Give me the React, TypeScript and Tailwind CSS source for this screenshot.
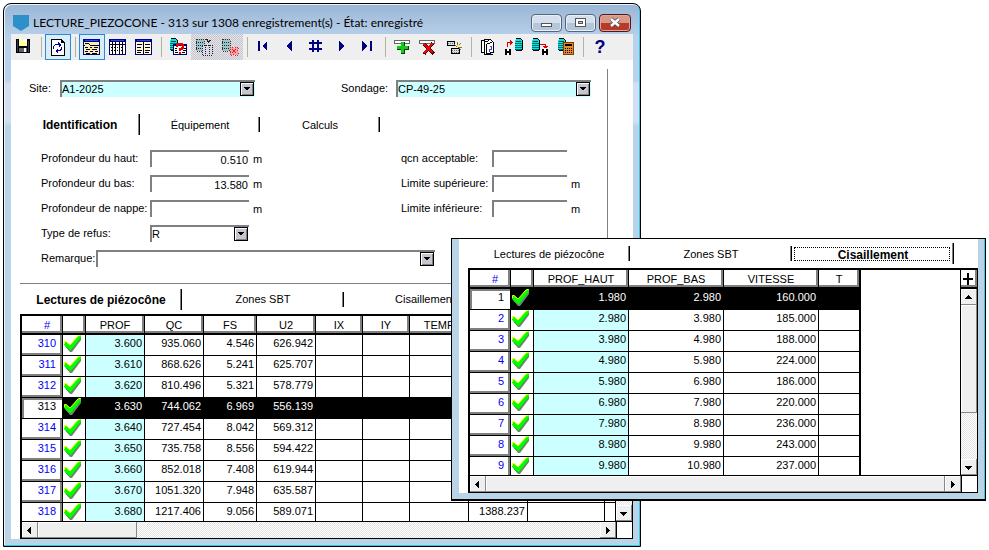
import { useState, type ReactNode } from "react";

type Column = { label: string; width: string; tint?: boolean };

const mainColumns: Column[] = [
  { label: "PROF", width: "w-[59px]", tint: true },
  { label: "QC", width: "w-[59px]" },
  { label: "FS", width: "w-[53px]" },
  { label: "U2", width: "w-[59px]" },
  { label: "IX", width: "w-[47px]" },
  { label: "IY", width: "w-[47px]" },
  { label: "TEMP", width: "w-[59px]" },
  { label: "", width: "w-[59px]" },
  { label: "", width: "w-[77px]" },
  { label: "", width: "w-[11px]" },
];

const mainRows = [
  ["310", "3.600", "935.060", "4.546", "626.942", "", "", "", "", "", ""],
  ["311", "3.610", "868.626", "5.241", "625.707", "", "", "", "", "", ""],
  ["312", "3.620", "810.496", "5.321", "578.779", "", "", "", "", "", ""],
  ["313", "3.630", "744.062", "6.969", "556.139", "", "", "", "", "", ""],
  ["314", "3.640", "727.454", "8.042", "569.312", "", "", "", "", "", ""],
  ["315", "3.650", "735.758", "8.556", "594.422", "", "", "", "", "", ""],
  ["316", "3.660", "852.018", "7.408", "619.944", "", "", "", "", "", ""],
  ["317", "3.670", "1051.320", "7.948", "635.587", "", "", "", "", "", ""],
  ["318", "3.680", "1217.406", "9.056", "589.071", "", "", "", "1388.237", "", ""],
];

const shearColumns: Column[] = [
  { label: "PROF_HAUT", width: "w-[95px]", tint: true },
  { label: "PROF_BAS", width: "w-[95px]" },
  { label: "VITESSE", width: "w-[95px]" },
  { label: "T", width: "w-[42px]" },
];

const shearRows = [
  ["1", "1.980", "2.980", "160.000", ""],
  ["2", "2.980", "3.980", "185.000", ""],
  ["3", "3.980", "4.980", "188.000", ""],
  ["4", "4.980", "5.980", "224.000", ""],
  ["5", "5.980", "6.980", "186.000", ""],
  ["6", "6.980", "7.980", "220.000", ""],
  ["7", "7.980", "8.980", "236.000", ""],
  ["8", "8.980", "9.980", "243.000", ""],
  ["9", "9.980", "10.980", "237.000", ""],
];

function Check() {
  return (
    <svg width="20" height="19" viewBox="0 0 20 19" className="block" role="img" aria-label="valide">
      <path d="M3 8 L8 12 L18 1 L18 5 L9 17 L7 17 L2 11 Z" fill="#808080" />
      <path d="M1 7 L3 6 L7 10 L15 1 L18 0 L18 3 L8 15 L7 15 L1 10 Z" fill="#00ff00" />
      <path d="M1.500 9 V6.500 H3 L7 10 L15 1 L18 0" fill="none" stroke="#ffff00" strokeWidth="1" />
      <path d="M3 12 L7 15.500 L8 15.500 L18 3" fill="none" stroke="#38a838" strokeWidth="1" />
    </svg>
  );
}

function Icon({ children }: { children: ReactNode }) {
  return (
    <svg width="18" height="18" viewBox="0 0 18 18" shapeRendering="crispEdges" aria-hidden="true">
      {children}
    </svg>
  );
}

function Database({ x, y, h = 13 }: { x: number; y: number; h?: number }) {
  const bands = [];
  for (let i = 4; i < h - 1; i += 2) bands.push(i);
  return (
    <g transform={`translate(${x} ${y})`}>
      <path d={`M2 0h5v1h1v1h1v${h - 3}h-1v1h-6v-1h-1v-${h - 3}h1z`} fill="#000" />
      <path d={`M2 1h5v1h1v${h - 4}h-1v1h-5v-1h-1v-${h - 4}h1z`} fill="#00e6e6" />
      {bands.map((b) => (
        <rect key={b} x="1" y={b + 1} width="7" height="1" fill="#004848" opacity="0.75" />
      ))}
      <rect x="2" y="3" width="5" height="1" fill="#004848" />
    </g>
  );
}

function GridFrame({ children }: { children?: ReactNode }) {
  return (
    <>
      <rect x="0" y="1" width="17" height="16" fill="#000080" />
      <rect x="1" y="4" width="15" height="12" fill="#fff" />
      <rect x="2" y="2" width="13" height="1" fill="#2a49d8" />
      {children}
    </>
  );
}

const icons = {
  save: (
    <Icon>
      <g transform="translate(-1 -1)">
        <rect x="2" y="2" width="14" height="14" fill="#000" />
        <rect x="5" y="2" width="8" height="7" fill="#ffff9c" />
        <rect x="9" y="2" width="4" height="3" fill="#fff" />
        <rect x="3" y="3" width="1" height="12" fill="#34345c" />
        <rect x="14" y="4" width="1" height="11" fill="#34345c" />
        <rect x="5" y="11" width="8" height="4" fill="#666" />
        <rect x="10" y="11" width="2" height="4" fill="#fff" />
      </g>
    </Icon>
  ),
  refresh: (
    <Icon>
      <path d="M2 1h10l4 4v13H2z" fill="#000" />
      <path d="M3 2h9v3h3v12H3z" fill="#fff" />
      <path d="M12.500 2v2.500H15" fill="none" stroke="#000" />
      <path d="M5 11V8h1V7h4v2h1V8h1V6h-1V5h-1V4H9v2H6v1H5v1H4v3z" fill="#0000a0" />
      <path d="M13 9v3h-1v1H9v2H8v-1H7v-2h1v-1h1v1h2v-1h1V9z" fill="#0000a0" />
    </Icon>
  ),
  form: (
    <Icon>
      <GridFrame>
        <rect x="1" y="4" width="15" height="12" fill="#f8ecb8" />
        <path
          d="M2 5h4M1 7h1M6 6h1M7 7h9M2 9h3M7 9h2M11 9h4M3 11h4M9 11h5M2 13h3M7 13h3M12 13h3M3 15h4M9 15h5"
          stroke="#000"
          transform="translate(0 .5)"
        />
      </GridFrame>
    </Icon>
  ),
  table: (
    <Icon>
      <GridFrame>
        <path d="M3.500 4v12M6.500 4v12M10.500 4v12M13.500 4v12" stroke="#000" />
        <path d="M1 6.500h15" stroke="#000" />
        <path d="M1.500 9.500h1M4.500 9.500h1M8 9.500h1M12 9.500h1M1.500 12.500h1M4.500 12.500h1M8 12.500h1M12 12.500h1" stroke="#000" />
      </GridFrame>
    </Icon>
  ),
  split: (
    <Icon>
      <GridFrame>
        <rect x="1" y="4" width="15" height="12" fill="#fff8dc" />
        <path
          d="M8.500 4v12M2 6.500h5M10 6.500h5M2 9.500h4M10 9.500h5M2 12.500h5M10 12.500h5M2 14.500h4M10 14.500h4"
          stroke="#000"
        />
      </GridFrame>
    </Icon>
  ),
  query: (
    <Icon>
      <Database x={0} y={0} />
      <rect x="4" y="6" width="14" height="11" fill="#000080" />
      <rect x="5" y="8" width="12" height="8" fill="#fff" />
      <path d="M6 10.500h2M14 10.500h3M6 12.500h2M14 12.500h3M6 14.500h3M13 14.500h3" stroke="#000" />
      <path d="M8 9V7h1V6h4v1h1v3h-1v1h-2v2M10 15h2" fill="none" stroke="#f00000" strokeWidth="2" />
    </Icon>
  ),
  tableOff: (
    <Icon>
      <path d="M2 1h6l1 1v10l-1 1H2l-1-1V2z" fill="#9cc4c8" stroke="#333" strokeDasharray="1 1" />
      <path d="M1 4.500h8M1 7.500h8M1 10.500h8" stroke="#222" strokeDasharray="1 1" />
      <path d="M7 7h10v10H7zM10 7v10M14 7v10" fill="#d8d8e8" stroke="#222" strokeDasharray="1 1" />
      <path d="M10 1h2v2h2v-1h2M13 3v2" fill="none" stroke="#222" />
    </Icon>
  ),
  deleteOff: (
    <Icon>
      <path d="M2 1h6l1 1v10l-1 1H2l-1-1V2z" fill="#9cc4c8" stroke="#333" strokeDasharray="1 1" />
      <path d="M1 4.500h8M1 7.500h8M1 10.500h8" stroke="#222" strokeDasharray="1 1" />
      <path
        d="M9 9h3l1 1 1-1h3v3l-1 1 1 1v3h-3l-1-1-1 1H9v-3l1-1-1-1z"
        fill="#f4a0a4"
        stroke="#e02030"
        strokeDasharray="1 1"
      />
      <path d="M11 11l4 4M15 11l-4 4" stroke="#e02030" />
    </Icon>
  ),
  first: (
    <Icon>
      <path d="M3 3h2v10H3zM12 3v10l-5-5z" fill="#000080" />
    </Icon>
  ),
  previous: (
    <Icon>
      <path d="M11 3v10L5 8z" fill="#000080" />
    </Icon>
  ),
  goto: (
    <Icon>
      <path d="M6 2v12M11 2v12M2 5h13M2 11h13" stroke="#000080" strokeWidth="2" />
    </Icon>
  ),
  next: (
    <Icon>
      <path d="M6 3v10l6-5z" fill="#000080" />
    </Icon>
  ),
  last: (
    <Icon>
      <path d="M3 3v10l6-5zM11 3h2v10h-2z" fill="#000080" />
    </Icon>
  ),
  add: (
    <Icon>
      <path d="M1.500 2.500h15v3h-15z" fill="#fff" stroke="#666" />
      <path d="M8 4h4v4h4v4h-4v4H8v-4H4V8h4z" fill="#004000" />
      <path d="M8 4h3v4h4v3h-4v4H8v-4H4V8h4z" fill="#10c818" />
    </Icon>
  ),
  remove: (
    <Icon>
      <path d="M.5 2.500h15v3H.5z" fill="#fff" stroke="#666" />
      <path d="M5 6l10 10M14 5L5 16" stroke="#500000" strokeWidth="3" />
      <path d="M5 6l9 9M14 5L5 15" stroke="#e00808" strokeWidth="2" />
    </Icon>
  ),
  duplicate: (
    <Icon>
      <path d="M2.500 3.500h7v4h-7zM6.500 10.500h8v5h-8z" fill="#ddd" stroke="#000" />
      <path d="M3 5.500h6M7 12.500h7M7 14.500h7" stroke="#777" strokeDasharray="1 1" />
      <path d="M12 4v3M16 5l-3 3M9 6l3 3M13 9h4M14 10l2 2" stroke="#8a7430" />
      <rect x="12" y="7" width="2" height="2" fill="#ffe860" />
    </Icon>
  ),
  documents: (
    <Icon>
      <path d="M2.500 2.500h3v-1h6l3 3v10h-3v1h-4v1h-2v-2h-3z" fill="#fff" stroke="#000" />
      <path d="M5.500 2v12M7.500 5.500v11h6M7.500 5.500h3l3-2M5.500 3.500h3l2-2" fill="none" stroke="#000" />
      <path d="M12 8v3h-2v2M11 8h2M10 11v3" stroke="#3048d8" fill="none" />
    </Icon>
  ),
  upload: (
    <Icon>
      <Database x={9} y={0} />
      <path d="M2.500 9V4.500H8M5.500 2v5M6.500 3v3" fill="none" stroke="#e00000" />
      <rect x="0" y="11" width="6" height="6" fill="#000" />
      <rect x="2" y="11" width="2" height="2" fill="#fff" />
      <rect x="2" y="15" width="2" height="2" fill="#fff" />
    </Icon>
  ),
  download: (
    <Icon>
      <Database x={0} y={0} />
      <path d="M9 6.500h5.500V10M12 8.500h5M13 9.500h3" fill="none" stroke="#e00000" />
      <rect x="11" y="11" width="6" height="6" fill="#000" />
      <rect x="13" y="11" width="2" height="2" fill="#fff" />
      <rect x="13" y="15" width="2" height="2" fill="#fff" />
    </Icon>
  ),
  calculator: (
    <Icon>
      <Database x={0} y={0} />
      <rect x="6" y="4" width="11" height="13" fill="#7a3c00" />
      <rect x="7" y="5" width="9" height="11" fill="#e88830" />
      <rect x="8" y="6" width="7" height="2" fill="#000" />
      <path d="M8 10h7M8 12h7M8 14h7" stroke="#000" strokeDasharray="1 1" transform="translate(0 .5)" />
    </Icon>
  ),
  help: <span className="text-lg leading-5 font-bold text-[#000080]">?</span>,
};

type ToolName = keyof typeof icons;
const toolGroups: { name: ToolName; label: string; state?: "on" | "off" }[][] = [
  [{ name: "save", label: "Enregistrer" }],
  [{ name: "refresh", label: "Actualiser", state: "on" }],
  [
    { name: "form", label: "Vue formulaire", state: "on" },
    { name: "table", label: "Vue table" },
    { name: "split", label: "Vue mixte" },
  ],
  [
    { name: "query", label: "Requête" },
    { name: "tableOff", label: "Filtrer", state: "off" },
    { name: "deleteOff", label: "Annuler la requête", state: "off" },
  ],
  [
    { name: "first", label: "Premier" },
    { name: "previous", label: "Précédent" },
    { name: "goto", label: "Aller à" },
    { name: "next", label: "Suivant" },
    { name: "last", label: "Dernier" },
  ],
  [
    { name: "add", label: "Ajouter" },
    { name: "remove", label: "Supprimer" },
    { name: "duplicate", label: "Dupliquer" },
  ],
  [
    { name: "documents", label: "Documents" },
    { name: "upload", label: "Importer" },
    { name: "download", label: "Exporter" },
    { name: "calculator", label: "Calculer" },
  ],
  [{ name: "help", label: "Aide" }],
];

function Toolbar() {
  return (
    <div role="toolbar" className="flex h-[26px] overflow-hidden bg-[#efefef]">
      {toolGroups.map((group, i) => (
        <div key={group[0].name} className="flex">
          {i > 0 && (
            <div className="flex w-2 justify-center py-[3px]">
              <div className="w-px bg-[#b4b49c]" />
            </div>
          )}
          {group.map((tool) => (
            <button
              key={tool.name}
              type="button"
              aria-label={tool.label}
              disabled={tool.state === "off"}
              className={
                "flex size-[26px] items-center justify-center " +
                (tool.state === "on"
                  ? "border border-[#2a8ad4] bg-[#d8effb]"
                  : tool.state === "off"
                    ? "bg-[repeating-conic-gradient(#c4c4cc_0_25%,#e6e6ea_0_50%)] bg-[length:2px_2px]"
                    : "")
              }
            >
              {icons[tool.name]}
            </button>
          ))}
        </div>
      ))}
    </div>
  );
}

function Tabs({
  names,
  active,
  onSelect,
  tabWidth,
  height,
  focused,
}: {
  names: string[];
  active: string;
  onSelect: (name: string) => void;
  tabWidth: string;
  height: string;
  focused?: boolean;
}) {
  return (
    <div role="tablist" className={"flex items-center " + height}>
      {names.map((name) => {
        const on = name === active;
        return (
          <div key={name} className={"flex shrink-0 items-center " + tabWidth}>
            <button
              type="button"
              role="tab"
              aria-selected={on}
              onClick={() => onSelect(name)}
              className={
                "h-[14px] flex-1 pt-px pl-[2px] whitespace-nowrap " +
                (on ? "text-xs leading-3 font-bold " : "leading-[13px] ") +
                (on && focused ? "mx-[2px] border border-dotted border-black" : "")
              }
            >
              {name}
            </button>
            <div className={"w-[2px] border-l border-[#808080] bg-black " + (on ? "h-[21px]" : "h-[15px]")} />
          </div>
        );
      })}
    </div>
  );
}

const arrows = {
  up: "M4 9h7L7.500 5z",
  down: "M4 6h7L7.500 10z",
  left: "M9 4v7L5 7.500z",
  right: "M6 4v7l4-3.500z",
};

function ScrollButton({ dir, label }: { dir: keyof typeof arrows; label: string }) {
  return (
    <button
      type="button"
      aria-label={label}
      className="size-4 shrink-0 bg-[#efefef] shadow-[inset_-1px_-1px_0_#888,inset_1px_1px_0_#fff]"
    >
      <svg width="15" height="15" viewBox="0 0 15 15" className="block" shapeRendering="crispEdges">
        <path d={arrows[dir]} fill="#000" />
      </svg>
    </button>
  );
}

const thumbStyle = "bg-[#efefef] shadow-[inset_-1px_-1px_0_#888,inset_1px_1px_0_#fff]";

function DataGrid({
  caption,
  columns,
  rows,
  selected,
  closed,
  vThumb,
  hThumb,
}: {
  caption: string;
  columns: Column[];
  rows: string[][];
  selected: string;
  closed?: boolean;
  vThumb: string;
  hThumb: string;
}) {
  const edge = (last: boolean) => (last ? (closed ? "border-r-2 " : "") : "border-r ");
  const lastIndex = columns.length - 1;
  return (
    <div className="border-t-2 border-r border-b border-l-2 border-black">
      <div className="flex h-[206px] border-b border-black">
        <div className="min-w-0 flex-1 overflow-hidden">
          <table className="w-0 table-fixed border-separate border-spacing-0" aria-label={caption}>
            <thead>
              <tr>
                <th className="h-[19px] w-[41px] border-r border-b-2 border-black p-0 pr-3 text-right leading-4 font-normal text-[#0000ff] shadow-[inset_-2px_-2px_0_#808080]">
                  #
                </th>
                <th className="h-[19px] w-[23px] border-r border-b-2 border-black p-0 shadow-[inset_-2px_-2px_0_#808080]" />
                {columns.map((c, i) => (
                  <th
                    key={i}
                    className={
                      "h-[19px] border-b-2 border-black p-0 text-center leading-4 font-normal shadow-[inset_-2px_-2px_0_#808080] " +
                      edge(i === lastIndex) +
                      c.width
                    }
                  >
                    {c.label}
                  </th>
                ))}
              </tr>
            </thead>
            <tbody>
              {rows.map((row) => {
                const on = row[0] === selected;
                return (
                  <tr key={row[0]} className={on ? "bg-black text-white" : ""}>
                    <th
                      scope="row"
                      className={
                        "h-[21px] border-r border-b border-black bg-white p-0 pr-[6px] text-right align-top leading-4 font-normal " +
                        (on
                          ? "text-black shadow-[inset_2px_2px_0_#808080]"
                          : "text-[#0000ff] shadow-[inset_-2px_-2px_0_#808080]")
                      }
                    >
                      {row[0]}
                    </th>
                    <td className="h-[21px] border-r border-b border-black p-0 align-top">
                      <Check />
                    </td>
                    {columns.map((c, i) => (
                      <td
                        key={i}
                        className={
                          "h-[21px] border-b border-black p-0 pr-[2px] text-right align-top leading-4 " +
                          edge(i === lastIndex) +
                          (c.tint && !on ? "bg-[#ccffff]" : "")
                        }
                      >
                        {row[i + 1]}
                      </td>
                    ))}
                  </tr>
                );
              })}
            </tbody>
          </table>
        </div>
        <div className="flex w-[17px] flex-col border-l border-black bg-[repeating-conic-gradient(#e4e4e4_0_25%,#fff_0_50%)] bg-[length:2px_2px]">
          <button
            type="button"
            aria-label="Ajouter une colonne"
            className="h-[19px] shrink-0 border-b-2 border-black bg-white shadow-[inset_-2px_-2px_0_#808080]"
          >
            <svg width="15" height="16" viewBox="0 0 15 16" className="block" shapeRendering="crispEdges">
              <path d="M6 2h2v5h4v2H8v5H6V9H2V7h4z" fill="#000" />
            </svg>
          </button>
          <ScrollButton dir="up" label="Défiler vers le haut" />
          <div className="flex-1">
            <div className={thumbStyle + " " + vThumb} />
          </div>
          <ScrollButton dir="down" label="Défiler vers le bas" />
        </div>
      </div>
      <div className="flex h-4 bg-[repeating-conic-gradient(#e4e4e4_0_25%,#fff_0_50%)] bg-[length:2px_2px]">
        <ScrollButton dir="left" label="Défiler à gauche" />
        <div className="flex-1">
          <div className={"h-4 " + thumbStyle + " " + hThumb} />
        </div>
        <ScrollButton dir="right" label="Défiler à droite" />
        <div className="w-4 border-l border-black bg-white" />
      </div>
    </div>
  );
}

function Combo({ id, options, width, tint }: { id: string; options: string[]; width: string; tint?: boolean }) {
  return (
    <div
      className={
        "relative h-[17px] border-t-2 border-l-2 border-[#808080] " + width + (tint ? " bg-[#ccffff]" : "")
      }
    >
      <select id={id} className="block h-[15px] w-full appearance-none leading-[15px] outline-none">
        {options.map((o) => (
          <option key={o}>{o}</option>
        ))}
      </select>
      <span className="pointer-events-none absolute top-0 right-px flex h-[14px] w-[14px] items-center justify-center border border-black bg-[#c6c6ce] shadow-[inset_1px_1px_0_#fff,inset_-1px_-1px_0_#808080]">
        <svg width="6" height="4" viewBox="0 0 6 4" shapeRendering="crispEdges">
          <path d="M0 0h6v1H5v1H4v1H2V2H1V1H0z" fill="#000" />
        </svg>
      </span>
    </div>
  );
}

function NumberField({
  id,
  label,
  value = "",
  unit,
  labelWidth,
  width,
}: {
  id: string;
  label: string;
  value?: string;
  unit?: string;
  labelWidth: string;
  width: string;
}) {
  return (
    <div className="flex h-[17px] items-center">
      <label htmlFor={id} className={"shrink-0 whitespace-nowrap " + labelWidth}>
        {label}
      </label>
      <input
        id={id}
        defaultValue={value}
        className={"h-[17px] border-t-2 border-l-2 border-[#808080] bg-white pr-px text-right outline-none " + width}
      />
      {unit && <span className="pt-[2px] pl-1">{unit}</span>}
    </div>
  );
}

function MainWindow() {
  const [section, setSection] = useState("Identification");
  const [sheet, setSheet] = useState("Lectures de piézocône");
  return (
    <section className="m-[3px] w-full max-w-[638px] rounded-t-lg border border-black bg-[linear-gradient(#9ab6d6,#b9d1ea_34px,#b9d1ea_76px,#d3def2_80px,#d3def2_118px,#b9d4e6_122px)] px-[7px] pb-[7px] shadow-[inset_-1px_-1px_0_#35c8e8,inset_1px_1px_0_#e8f4fc]">
      <header className="flex h-[30px] items-center">
        <svg width="16" height="16" viewBox="0 0 16 16" className="mt-2 ml-[2px]" aria-hidden="true">
          <path d="M0 0h16v11l-8 5-8-5z" fill="#2e90c8" />
        </svg>
        <h1 className="mt-2 ml-1 flex-1 font-['Lato','Open_Sans',sans-serif] text-xs leading-5 whitespace-nowrap">
          LECTURE_PIEZOCONE - 313 sur 1308 enregistrement(s) - État: enregistré
        </h1>
        <div className="mt-[7px] mr-[2px] flex gap-[3px]">
          <button
            type="button"
            aria-label="Réduire"
            className="h-[18px] w-[31px] rounded-sm border border-[#56657c] bg-linear-to-b from-[#d4e0ee] from-50% to-[#b4c6dc] to-50% shadow-[inset_0_0_0_1px_#e8f0f8]"
          >
            <svg width="29" height="16" viewBox="0 0 29 16" className="block" shapeRendering="crispEdges">
              <path d="M9.500 8.500h10v3h-10z" fill="#fff" stroke="#555" />
            </svg>
          </button>
          <button
            type="button"
            aria-label="Agrandir"
            className="h-[18px] w-[31px] rounded-sm border border-[#56657c] bg-linear-to-b from-[#d4e0ee] from-50% to-[#b4c6dc] to-50% shadow-[inset_0_0_0_1px_#e8f0f8]"
          >
            <svg width="29" height="16" viewBox="0 0 29 16" className="block" shapeRendering="crispEdges">
              <path d="M9.500 3.500h10v8h-10z" fill="#fff" stroke="#555" />
              <path d="M12.500 6.500h4v2h-4z" fill="#b4c6dc" stroke="#555" />
            </svg>
          </button>
          <button
            type="button"
            aria-label="Fermer"
            className="h-[18px] w-[32px] rounded-sm border border-[#4c1a1a] bg-linear-to-b from-[#d89888] from-50% to-[#b83a28] to-50% shadow-[inset_0_0_0_1px_#e0a898]"
          >
            <svg width="30" height="16" viewBox="0 0 30 16" className="block">
              <path d="M11 4l8 7M19 4l-8 7" stroke="#4a4a5a" strokeWidth="4" />
              <path d="M11 4l8 7M19 4l-8 7" stroke="#fff" strokeWidth="2.500" />
            </svg>
          </button>
        </div>
      </header>
      <Toolbar />
      <div className="bg-white pt-[9px] pl-[9px]">
        <form className="mr-[25px] border-r border-b border-[#808080] pt-[11px] pb-4">
          <div className="flex gap-[86px] pl-[9px]">
            <div className="flex items-center">
              <label htmlFor="site" className="w-[31px]">
                Site:
              </label>
              <Combo id="site" options={["A1-2025"]} width="w-[195px]" tint />
            </div>
            <div className="flex items-center">
              <label htmlFor="sondage" className="w-[55px]">
                Sondage:
              </label>
              <Combo id="sondage" options={["CP-49-25"]} width="w-[195px]" tint />
            </div>
          </div>
          <div className="pt-[17px] pb-[15px]">
            <Tabs
              names={["Identification", "Équipement", "Calculs"]}
              active={section}
              onSelect={setSection}
              tabWidth="w-[120px]"
              height="h-[21px]"
            />
          </div>
          <div className="flex flex-col gap-2 pl-[21px]">
            <div className="flex">
              <div className="flex w-[360px] flex-col gap-2">
                <NumberField id="haut" label="Profondeur du haut:" value="0.510" unit="m" labelWidth="w-[109px]" width="w-[99px]" />
                <NumberField id="bas" label="Profondeur du bas:" value="13.580" unit="m" labelWidth="w-[109px]" width="w-[99px]" />
                <NumberField id="nappe" label="Profondeur de nappe:" unit="m" labelWidth="w-[109px]" width="w-[99px]" />
                <div className="flex items-center">
                  <label htmlFor="refus" className="w-[109px]">
                    Type de refus:
                  </label>
                  <Combo id="refus" options={["R"]} width="w-[99px]" />
                </div>
              </div>
              <div className="flex flex-col gap-2">
                <NumberField id="qcn" label="qcn acceptable:" labelWidth="w-[91px]" width="w-[75px]" />
                <NumberField id="sup" label="Limite supérieure:" unit="m" labelWidth="w-[91px]" width="w-[75px]" />
                <NumberField id="inf" label="Limite inférieure:" unit="m" labelWidth="w-[91px]" width="w-[75px]" />
              </div>
            </div>
            <div className="flex items-center">
              <label htmlFor="remarque" className="w-[55px]">
                Remarque:
              </label>
              <Combo id="remarque" options={[""]} width="w-[339px]" />
            </div>
          </div>
        </form>
        <Tabs
          names={["Lectures de piézocône", "Zones SBT", "Cisaillement"]}
          active={sheet}
          onSelect={setSheet}
          tabWidth="w-[162px]"
          height="h-[30px]"
        />
        <DataGrid
          caption="Lectures de piézocône"
          columns={mainColumns}
          rows={mainRows}
          selected="313"
          vThumb="h-8"
          hThumb="w-[99px]"
        />
      </div>
    </section>
  );
}

function ShearWindow() {
  const [sheet, setSheet] = useState("Cisaillement");
  return (
    <section className="absolute top-[238px] right-[3px] left-[451px] border border-b-2 border-black bg-[#b9d4e6] px-[7px] pb-[6px] shadow-[inset_-1px_0_0_#35c8f0]">
      <div className="bg-white pl-[9px]">
        <Tabs
          names={["Lectures de piézocône", "Zones SBT", "Cisaillement"]}
          active={sheet}
          onSelect={setSheet}
          tabWidth="w-[162px]"
          height="h-[29px]"
          focused
        />
        <DataGrid
          caption="Cisaillement"
          columns={shearColumns}
          rows={shearRows}
          selected="1"
          closed
          vThumb="h-[108px]"
          hThumb="w-full"
        />
      </div>
    </section>
  );
}

export default function App() {
  return (
    <main className="relative flex min-h-screen bg-white font-['Liberation_Sans',Arial,sans-serif] text-[11px] leading-[13px] text-black">
      <MainWindow />
      <ShearWindow />
    </main>
  );
}
